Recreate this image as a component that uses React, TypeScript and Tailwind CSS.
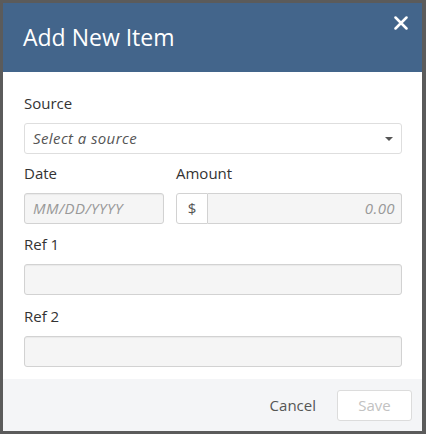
const font = { fontFamily: '"Open Sans", "Liberation Sans", sans-serif' }

function Label({ children }: { children: string }) {
  return <div className="mb-[10px] h-5 text-[15px] leading-5 text-[#333]">{children}</div>
}

function DisabledInput({ placeholder = '' }: { placeholder?: string }) {
  return (
    <div className="flex h-[31px] w-full items-center rounded-[3px] border border-[#d2d2d2] bg-[#f5f5f5] px-2 text-[15px] italic tracking-[0.4px] text-[#999] shadow-[inset_0_1px_1px_rgba(0,0,0,0.05)]">
      {placeholder}
    </div>
  )
}

export default function App() {
  return (
    <div className="h-[434px] w-[426px] bg-[#5b5b5b] pl-[3px] pt-[3px]" style={font}>
      <div className="flex h-[428px] w-[419px] flex-col bg-white">
        <header className="relative flex h-[69px] shrink-0 items-center bg-[#43658b] pl-5">
          <h2 className="text-[23px] font-normal leading-none text-white">Add New Item</h2>
          <button className="absolute right-[11px] top-[10px] p-[3px]" aria-label="Close">
            <svg width="14" height="14" viewBox="0 0 14 14" fill="none">
              <path d="M1.5 1.5 L12.5 12.5 M12.5 1.5 L1.5 12.5" stroke="white" strokeWidth="2.5" strokeLinecap="round" />
            </svg>
          </button>
        </header>

        <div className="flex flex-1 flex-col pl-[21px] pr-[20px] pt-[21px]">
          <Label>Source</Label>
          <div className="flex h-[31px] w-full items-center justify-between rounded-[3px] border border-[#dedede] bg-white pl-2 pr-[8px] text-[15px] italic tracking-[0.4px] text-[#555]">
            <span>Select a source</span>
            <span className="h-0 w-0 border-x-[4px] border-t-[4px] border-x-transparent border-t-[#555]" />
          </div>

          <div className="mt-[9px] flex gap-3">
            <div className="w-[140px]">
              <Label>Date</Label>
              <DisabledInput placeholder="MM/DD/YYYY" />
            </div>
            <div className="flex-1">
              <Label>Amount</Label>
              <div className="flex h-[31px]">
                <div className="flex w-[32px] items-center justify-center rounded-l-[3px] border border-[#d2d2d2] bg-white text-[15px] text-[#555]">
                  $
                </div>
                <div className="flex flex-1 items-center justify-end overflow-hidden rounded-r-[3px] border border-l-0 border-[#d2d2d2] bg-[#f5f5f5] pr-[6px] text-[15px] italic tracking-[0.4px] text-[#999]">
                  0.00
                </div>
              </div>
            </div>
          </div>

          <div className="mt-[10px]">
            <Label>Ref 1</Label>
            <DisabledInput />
          </div>

          <div className="mt-[11px]">
            <Label>Ref 2</Label>
            <DisabledInput />
          </div>
        </div>

        <footer className="flex h-[52px] shrink-0 items-center justify-end bg-[#f4f5f7] pr-[10px]">
          <button className="mr-[21px] text-[15px] text-[#555]">Cancel</button>
          <button className="h-[31px] w-[75px] rounded-[3px] border border-[#dcdcdc] bg-white text-[15px] text-[#c2c2c2]">
            Save
          </button>
        </footer>
      </div>
    </div>
  )
}
